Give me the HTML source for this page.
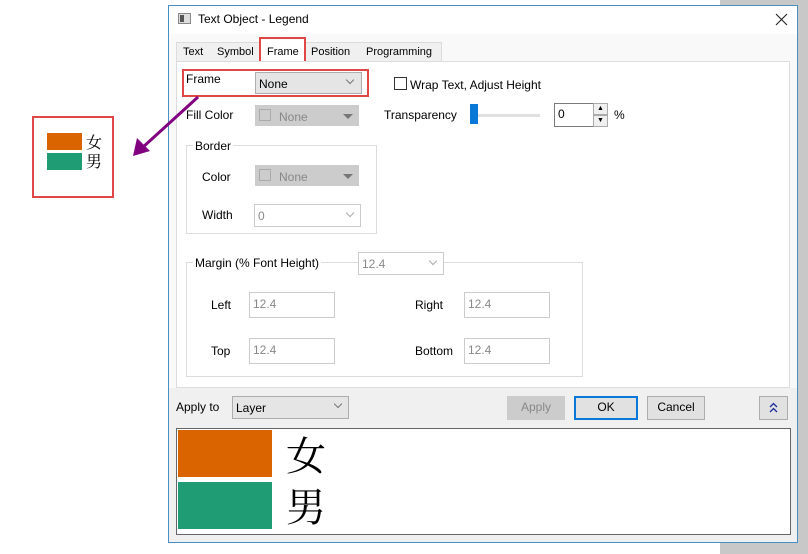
<!DOCTYPE html>
<html><head><meta charset="utf-8"><style>
*{box-sizing:border-box;margin:0;padding:0}
body{width:808px;height:554px;position:relative;background:#fff;font-family:"Segoe UI","Liberation Sans",sans-serif;font-size:12px;color:#000;overflow:hidden}
.a{position:absolute}
.t{position:absolute;line-height:14px;white-space:nowrap}
.cb{position:absolute;border:1px solid #adadad;background:#e5e5e5}
.dis{position:absolute;background:#ccc;border:1px solid #ccc;color:#888}
.inp{position:absolute;border:1px solid #ccc;background:#fff;color:#888;padding:3px 3px;line-height:16px}
.chev{position:absolute;width:6px;height:6px;border-right:1px solid #777;border-bottom:1px solid #777;transform:rotate(45deg)}
.tri{position:absolute;width:0;height:0;border-left:5px solid transparent;border-right:5px solid transparent;border-top:5px solid #777}
.btn{position:absolute;border:1px solid #adadad;background:#e1e1e1;text-align:center;line-height:21px}
.grp{position:absolute;border:1px solid #dcdcdc}
.red{position:absolute;border:2px solid #e04848}
.cjk{font-family:"Noto Serif CJK SC","Noto Sans CJK SC",serif}
</style></head><body>
<div class="a" style="left:720px;top:0;width:88px;height:554px;background:#c8c8c8"></div>
<div class="a" style="left:168px;top:5px;width:630px;height:538px;background:#fff;border:1px solid #4a8fc4"></div>
<div class="a" style="left:169px;top:34px;width:628px;height:508px;background:#f9f9f9"></div>
<div class="a" style="left:169px;top:388px;width:628px;height:154px;background:#f0f0f0"></div>
<!-- title -->
<div class="a" style="left:178px;top:13px;width:13px;height:11px;border:1px solid #888;background:#ddd"><div class="a" style="left:1px;top:1px;width:4px;height:7px;background:#555"></div></div>
<div class="t" style="left:198px;top:12px;font-size:12px">Text Object - Legend</div>
<svg class="a" style="left:775px;top:13px" width="13" height="13"><path d="M1 1L12 12M12 1L1 12" stroke="#222" stroke-width="1.1"/></svg>
<!-- tabs -->
<div class="a" style="left:176px;top:42px;width:266px;height:20px;border:1px solid #dcdcdc;border-bottom:none;background:#f0f0f0"></div>
<div class="a" style="left:260px;top:40px;width:46px;height:22px;background:#fff"></div>
<div class="t" style="left:183px;top:45px;font-size:11px">Text</div>
<div class="t" style="left:217px;top:45px;font-size:11px">Symbol</div>
<div class="t" style="left:267px;top:45px;font-size:11px">Frame</div>
<div class="t" style="left:311px;top:45px;font-size:11px">Position</div>
<div class="t" style="left:366px;top:45px;font-size:11px">Programming</div>
<div class="red" style="left:259px;top:37px;width:47px;height:29px"></div>
<!-- panel -->
<div class="a" style="left:176px;top:61px;width:614px;height:327px;border:1px solid #dcdcdc;background:#fff"></div>
<div class="t" style="left:186px;top:72px">Frame</div>
<div class="cb" style="left:255px;top:72px;width:107px;height:22px"></div>
<div class="t" style="left:259px;top:77px">None</div>
<div class="chev" style="left:347px;top:77px"></div>
<div class="red" style="left:182px;top:69px;width:187px;height:28px"></div>
<div class="a" style="left:394px;top:77px;width:13px;height:13px;border:1px solid #333;background:#fff"></div>
<div class="t" style="left:410px;top:78px">Wrap Text, Adjust Height</div>
<div class="t" style="left:186px;top:108px">Fill Color</div>
<div class="dis" style="left:255px;top:105px;width:104px;height:21px"></div>
<div class="a" style="left:259px;top:109px;width:12px;height:12px;border:1px solid #aaa"></div>
<div class="t" style="left:279px;top:110px;color:#888">None</div>
<div class="tri" style="left:343px;top:114px"></div>
<div class="t" style="left:384px;top:108px">Transparency</div>
<div class="a" style="left:470px;top:114px;width:70px;height:3px;background:#e0e0e0"></div>
<div class="a" style="left:470px;top:104px;width:8px;height:20px;background:#0a78d7"></div>
<div class="a" style="left:554px;top:103px;width:40px;height:24px;border:1px solid #7a7a7a;background:#fff"></div>
<div class="t" style="left:558px;top:107px">0</div>
<div class="a" style="left:593px;top:103px;width:15px;height:12px;border:1px solid #aaa;background:#f0f0f0;font-size:7px;text-align:center;line-height:10px">▲</div>
<div class="a" style="left:593px;top:115px;width:15px;height:12px;border:1px solid #aaa;background:#f0f0f0;font-size:7px;text-align:center;line-height:10px">▼</div>
<div class="t" style="left:614px;top:108px">%</div>
<!-- border group -->
<div class="grp" style="left:186px;top:145px;width:191px;height:89px"></div>
<div class="t" style="left:193px;top:139px;background:#fff;padding:0 2px">Border</div>
<div class="t" style="left:202px;top:170px">Color</div>
<div class="dis" style="left:255px;top:165px;width:104px;height:21px"></div>
<div class="a" style="left:259px;top:169px;width:12px;height:12px;border:1px solid #aaa"></div>
<div class="t" style="left:279px;top:170px;color:#888">None</div>
<div class="tri" style="left:343px;top:174px"></div>
<div class="t" style="left:202px;top:208px">Width</div>
<div class="inp" style="left:254px;top:204px;width:107px;height:23px">0</div>
<div class="chev" style="left:347px;top:210px;border-color:#aaa"></div>
<!-- margin group -->
<div class="grp" style="left:186px;top:262px;width:397px;height:115px"></div>
<div class="t" style="left:193px;top:256px;background:#fff;padding:0 2px">Margin (% Font Height)</div>
<div class="inp" style="left:358px;top:252px;width:86px;height:23px">12.4</div>
<div class="chev" style="left:430px;top:258px;border-color:#aaa"></div>
<div class="t" style="left:211px;top:298px">Left</div>
<div class="inp" style="left:249px;top:292px;width:86px;height:26px">12.4</div>
<div class="t" style="left:415px;top:298px">Right</div>
<div class="inp" style="left:464px;top:292px;width:86px;height:26px">12.4</div>
<div class="t" style="left:211px;top:344px">Top</div>
<div class="inp" style="left:249px;top:338px;width:86px;height:26px">12.4</div>
<div class="t" style="left:415px;top:344px">Bottom</div>
<div class="inp" style="left:464px;top:338px;width:86px;height:26px">12.4</div>
<!-- bottom -->
<div class="t" style="left:176px;top:400px">Apply to</div>
<div class="cb" style="left:232px;top:396px;width:117px;height:23px;background:#e5e5e5"></div>
<div class="t" style="left:236px;top:401px">Layer</div>
<div class="chev" style="left:335px;top:401px"></div>
<div class="btn" style="left:507px;top:396px;width:58px;height:24px;background:#ccc;border-color:#ccc;color:#888">Apply</div>
<div class="btn" style="left:574px;top:396px;width:64px;height:24px;border:2px solid #0a78d7;line-height:19px">OK</div>
<div class="btn" style="left:647px;top:396px;width:58px;height:24px">Cancel</div>
<div class="btn" style="left:759px;top:396px;width:29px;height:24px"></div>
<svg class="a" style="left:769px;top:402px" width="9" height="12"><path d="M1 5L4.5 1.5L8 5M1 10L4.5 6.5L8 10" stroke="#1a2a9a" stroke-width="1.3" fill="none"/></svg>
<!-- preview -->
<div class="a" style="left:176px;top:428px;width:615px;height:107px;border:1px solid #666;background:#fff"></div>
<div class="a" style="left:178px;top:430px;width:94px;height:47px;background:#d96400"></div>
<div class="a" style="left:178px;top:482px;width:94px;height:47px;background:#1f9c74"></div>
<div class="t cjk" style="left:286px;top:432px;font-size:40px;line-height:44px">女</div>
<div class="t cjk" style="left:286px;top:483px;font-size:40px;line-height:44px">男</div>
<!-- left legend -->
<div class="red" style="left:32px;top:116px;width:82px;height:82px"></div>
<div class="a" style="left:47px;top:133px;width:35px;height:17px;background:#d96400"></div>
<div class="a" style="left:47px;top:153px;width:35px;height:17px;background:#1f9c74"></div>
<div class="t cjk" style="left:86px;top:132px;font-size:16px;line-height:19px">女</div>
<div class="t cjk" style="left:86px;top:151px;font-size:16px;line-height:19px">男</div>
<svg class="a" style="left:0;top:0" width="808" height="554"><line x1="198" y1="97" x2="142" y2="148" stroke="#800080" stroke-width="3"/><polygon points="133,156 137,138 150,151" fill="#800080"/></svg>
</body></html>
